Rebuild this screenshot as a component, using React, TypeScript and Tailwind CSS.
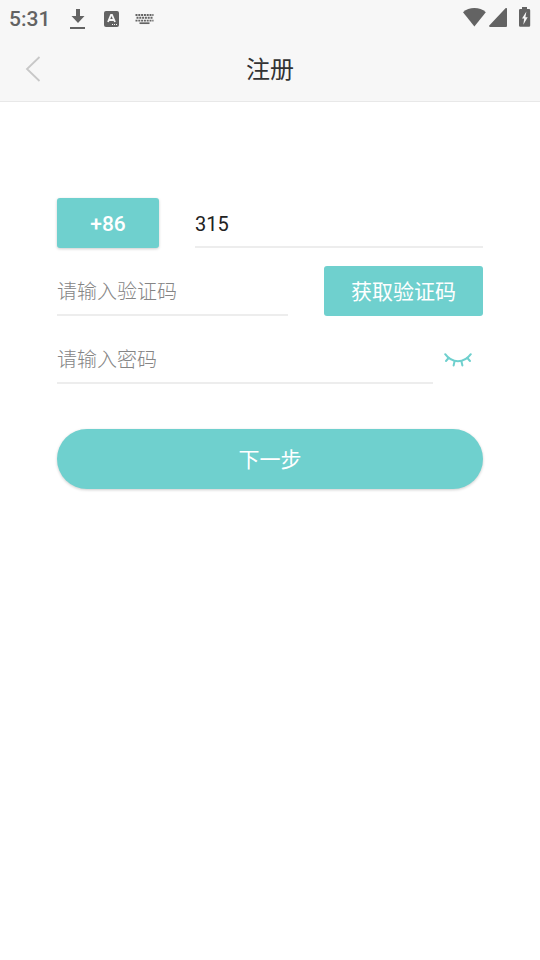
import React, { useState } from "react";

const inputStyle =
  "h-[50px] min-w-0 flex-1 border-b-2 border-[#ededed] bg-transparent pt-1 text-xl text-[#222222] outline-none placeholder:font-light placeholder:text-[#858585]";

const StatusBar = () => {
  return (
    <div className="flex h-9 items-center justify-between px-[9px] text-[#636363]">
      <div className="flex items-center pt-0.5">
        <span className="w-[61px] text-[21px] font-medium leading-8">5:31</span>
        {/* download */}
        <svg width="16" height="20" viewBox="0 0 16 20" fill="currentColor">
          <path d="M6 0h4v7h4.500L8 14 1.500 7H6z" />
          <path d="M0 18h15v2H0z" />
        </svg>
        {/* input method */}
        <svg className="ml-[18px]" width="15" height="16" viewBox="0 0 15 16">
          <rect width="15" height="16" rx="2" fill="currentColor" />
          <path
            d="M4 11 7 4h1l3 7M5 9h5"
            fill="none"
            stroke="#f7f7f7"
            strokeWidth="1.8"
          />
          <path d="M8 13h1v1H8zM10 13h1v1h-1zM12 13h1v1h-1z" fill="#f7f7f7" />
        </svg>
        {/* keyboard */}
        <svg
          className="ml-4"
          width="19"
          height="11"
          viewBox="0 0 19 11"
          fill="none"
          stroke="currentColor"
        >
          <path d="M.5 1h18" strokeWidth="1.9" strokeDasharray="2 .8" />
          <path d="M1.5 3.8h16" strokeWidth="1.9" strokeDasharray="2 .8" />
          <path d="M.5 6.6h18" strokeWidth="1.9" strokeDasharray="2 .8" />
          <path d="M4.5 9.200h10" strokeWidth="1.7" />
        </svg>
      </div>
      <div className="flex items-center pb-0.5" aria-hidden="true">
        <svg width="24" height="20" viewBox="0 0 24 20" fill="currentColor">
          <path d="M11 19.5-.4 5.200C2.700 2.400 6.700 1 11 1s8.300 1.400 11.400 4.200z" transform="translate(.4 0)" />
        </svg>
        <svg className="ml-[2px]" width="19" height="20" viewBox="0 0 19 20" fill="currentColor">
          <path d="M18 1.500V19a1 1 0 0 1-1 1H1c-.9 0-1.300-1-.7-1.600L16.500 1.200c.6-.5 1.500-.3 1.500.3z" />
        </svg>
        <svg className="ml-[11px]" width="12" height="20" viewBox="0 0 12 20">
          <path
            d="M3 0h5v2h2a1.200 1.200 0 0 1 1.200 1.200v15.300a1.200 1.200 0 0 1-1.200 1.200H1.200A1.200 1.200 0 0 1 0 18.500V3.200A1.200 1.200 0 0 1 1.200 2H3z"
            fill="currentColor"
          />
          <path d="M7.400 4.500 3 11.500h2.200l-.9 6.200 4.400-7.500H6.400z" fill="#f7f7f7" />
        </svg>
      </div>
    </div>
  );
};

const ClosedEye = () => {
  return (
    <svg
      width="28"
      height="14"
      viewBox="0 0 28 14"
      fill="none"
      stroke="#6fd0ce"
      strokeWidth="2"
      strokeLinecap="round"
    >
      <path d="M1.200 1.200C8 10.600 20 10.600 26.800 1.200" />
      <path d="M4.600 5 2 8M10.600 8.200 9.600 12.500M17.400 8.200l1 4.300M23.400 5 26 8" />
    </svg>
  );
};

const App = () => {
  const [phone, setPhone] = useState("315");
  const [code, setCode] = useState("");
  const [password, setPassword] = useState("");
  const [visible, setVisible] = useState(false);

  return (
    <div className="min-h-screen bg-white font-[Roboto,'Noto_Sans_CJK_SC',sans-serif]">
      <header className="border-b border-[#e8e8e8] bg-[#f7f7f7]">
        <StatusBar />
        <div className="grid h-[65px] grid-cols-[66px_1fr_66px] items-center">
          <button type="button" aria-label="返回" className="flex justify-center">
            <svg width="16" height="26" viewBox="0 0 16 26" fill="none">
              <path d="M14.500 1 2 13l12.500 12" stroke="#c8c8c8" strokeWidth="1.800" />
            </svg>
          </button>
          <h1 className="pt-0.5 text-center text-2xl text-[#333333]">注册</h1>
        </div>
      </header>

      <form
        className="flex flex-col gap-[18px] px-[57px] pt-24"
        onSubmit={(e) => e.preventDefault()}
      >
        <div className="flex gap-9">
          <button
            type="button"
            className="h-[50px] w-[102px] rounded-[3px] bg-[#6fd0ce] pt-1 text-[21px] font-medium text-white shadow-[0_1px_3px_rgba(0,0,0,0.2)]"
          >
            +86
          </button>
          <input
            type="tel"
            aria-label="手机号"
            value={phone}
            onChange={(e) => setPhone(e.target.value)}
            className={inputStyle}
          />
        </div>

        <div className="flex gap-9">
          <input
            type="text"
            aria-label="验证码"
            placeholder="请输入验证码"
            value={code}
            onChange={(e) => setCode(e.target.value)}
            className={inputStyle}
          />
          <button
            type="button"
            className="h-[50px] w-[159px] rounded-[3px] bg-[#6fd0ce] pt-1 text-[21px] text-white"
          >
            获取验证码
          </button>
        </div>

        <div className="flex">
          <input
            type={visible ? "text" : "password"}
            aria-label="密码"
            placeholder="请输入密码"
            value={password}
            onChange={(e) => setPassword(e.target.value)}
            className={inputStyle}
          />
          <button
            type="button"
            aria-label="显示密码"
            aria-pressed={visible}
            onClick={() => setVisible(!visible)}
            className="flex h-[50px] w-[50px] items-center justify-center pt-0.5"
          >
            <ClosedEye />
          </button>
        </div>

        <button
          type="submit"
          className="mt-[27px] h-[60px] rounded-full bg-[#6fd0ce] pt-1 text-[21px] text-white shadow-[0_1px_3px_rgba(0,0,0,0.2)]"
        >
          下一步
        </button>
      </form>
    </div>
  );
};

export default App;
